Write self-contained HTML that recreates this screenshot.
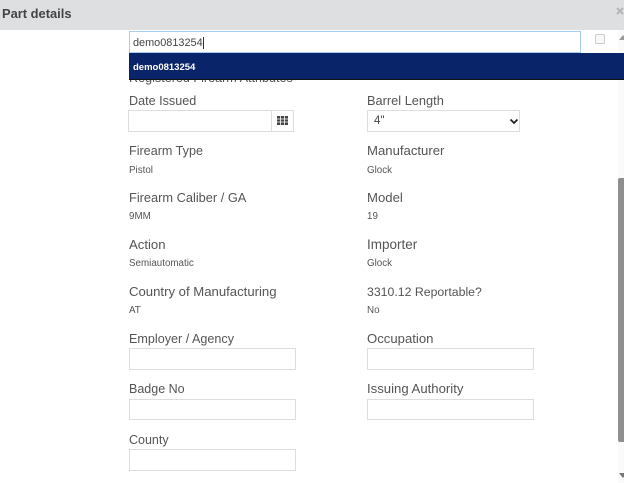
<!DOCTYPE html>
<html><head><meta charset="utf-8"><style>
html,body{margin:0;padding:0;width:624px;height:483px;overflow:hidden;background:#fff}
body{position:relative;font-family:"Liberation Sans",sans-serif}
.a{position:absolute;white-space:nowrap}
.l{font-size:13.15px;line-height:16px;color:#555;height:16px}
.v{font-size:9.8px;line-height:12px;color:#555}
.i{position:absolute;box-sizing:border-box;border:1px solid #ddd;background:#fff}
</style></head><body>
<div class="a" style="left:618px;top:30px;width:6px;height:453px;background:#fafafa"></div>
<div class="a" style="left:0;top:0;width:624px;height:30px;background:#dedfe1"></div>
<div class="a" style="left:2px;top:5px;font-size:12.9px;line-height:18px;font-weight:bold;color:#444">Part details</div>
<svg class="a" style="left:616px;top:7px" width="8" height="8"><path d="M1 1L7 7M7 1L1 7" stroke="#b5b5b5" stroke-width="2"/></svg>

<div class="a" style="left:129px;top:71px;font-size:12.600px;line-height:14px;color:#555">Registered Firearm Attributes</div>
<div class="i" style="left:129px;top:31px;width:452px;height:22px;border-color:#a5cdf0"></div>
<div class="a" style="left:133px;top:36px;font-size:10.900px;line-height:14px;color:#444">demo0813254<span style="border-left:1px solid #333;margin-left:0"></span></div>
<div class="i" style="left:595px;top:34px;width:10px;height:10px;border-color:#ccc;border-radius:2px;background:#f8f8f8"></div>
<div class="a" style="left:619px;top:35px;width:0;height:0;border-left:4px solid transparent;border-right:4px solid transparent;border-bottom:5px solid #999"></div>
<div class="a" style="left:129px;top:53px;width:495px;height:27px;background:#092468;border-bottom:1px solid #111;box-sizing:border-box"></div>
<div class="a" style="left:133px;top:62px;font-size:9.5px;line-height:12px;font-weight:bold;color:#fff">demo0813254</div>

<div class="a l" style="left:129px;top:93px;font-size:12.6px">Date Issued</div>
<div class="i" style="left:128px;top:110px;width:144px;height:22px"></div>
<div class="i" style="left:271px;top:110px;width:23px;height:22px"></div>
<svg class="a" style="left:277px;top:116px" width="12" height="10"><path d="M0 0h11v9H0z" fill="#444"/><path d="M3.5 0v9M7.5 0v9M0 3h11M0 6h11" stroke="#fff" stroke-width=".8"/></svg>

<div class="a l" style="left:367px;top:93px;font-size:12.8px">Barrel Length</div>
<div class="i" style="left:367px;top:110px;width:153px;height:22px"></div>
<div class="a" style="left:374px;top:114px;font-size:11.5px;line-height:14px;color:#444">4"</div>
<svg class="a" style="left:509px;top:118px" width="10" height="7"><path d="M1.500 1.500L5 5L8.500 1.500" fill="none" stroke="#222" stroke-width="1.800"/></svg>

<div class="a l" style="left:129px;top:143px;font-size:12.6px">Firearm Type</div>
<div class="a v" style="left:129px;top:165px">Pistol</div>
<div class="a l" style="left:367px;top:143px">Manufacturer</div>
<div class="a v" style="left:367px;top:165px">Glock</div>

<div class="a l" style="left:129px;top:190px;font-size:12.8px">Firearm Caliber / GA</div>
<div class="a v" style="left:129px;top:211px">9MM</div>
<div class="a l" style="left:367px;top:190px">Model</div>
<div class="a v" style="left:367px;top:211px">19</div>

<div class="a l" style="left:129px;top:237px">Action</div>
<div class="a v" style="left:129px;top:258px">Semiautomatic</div>
<div class="a l" style="left:367px;top:237px;font-size:13.5px">Importer</div>
<div class="a v" style="left:367px;top:258px">Glock</div>

<div class="a l" style="left:129px;top:284px">Country of Manufacturing</div>
<div class="a v" style="left:129px;top:305px">AT</div>
<div class="a l" style="left:367px;top:284px;font-size:12.3px">3310.12 Reportable?</div>
<div class="a v" style="left:367px;top:305px">No</div>

<div class="a l" style="left:129px;top:331px;font-size:12.6px">Employer / Agency</div>
<div class="i" style="left:129px;top:348px;width:167px;height:22px"></div>
<div class="a l" style="left:367px;top:331px">Occupation</div>
<div class="i" style="left:367px;top:348px;width:167px;height:22px"></div>

<div class="a l" style="left:129px;top:381px;font-size:12.5px">Badge No</div>
<div class="i" style="left:129px;top:399px;width:167px;height:21px"></div>
<div class="a l" style="left:367px;top:381px">Issuing Authority</div>
<div class="i" style="left:367px;top:399px;width:167px;height:21px"></div>

<div class="a l" style="left:129px;top:432px;font-size:12.5px">County</div>
<div class="i" style="left:129px;top:449px;width:167px;height:22px"></div>

<div class="a" style="left:618px;top:178px;width:6px;height:264px;background:#8f8f8f;border-radius:2px 0 0 2px"></div>
<div class="a" style="left:619px;top:473px;width:0;height:0;border-left:4px solid transparent;border-right:4px solid transparent;border-top:5px solid #777"></div>
</body></html>
